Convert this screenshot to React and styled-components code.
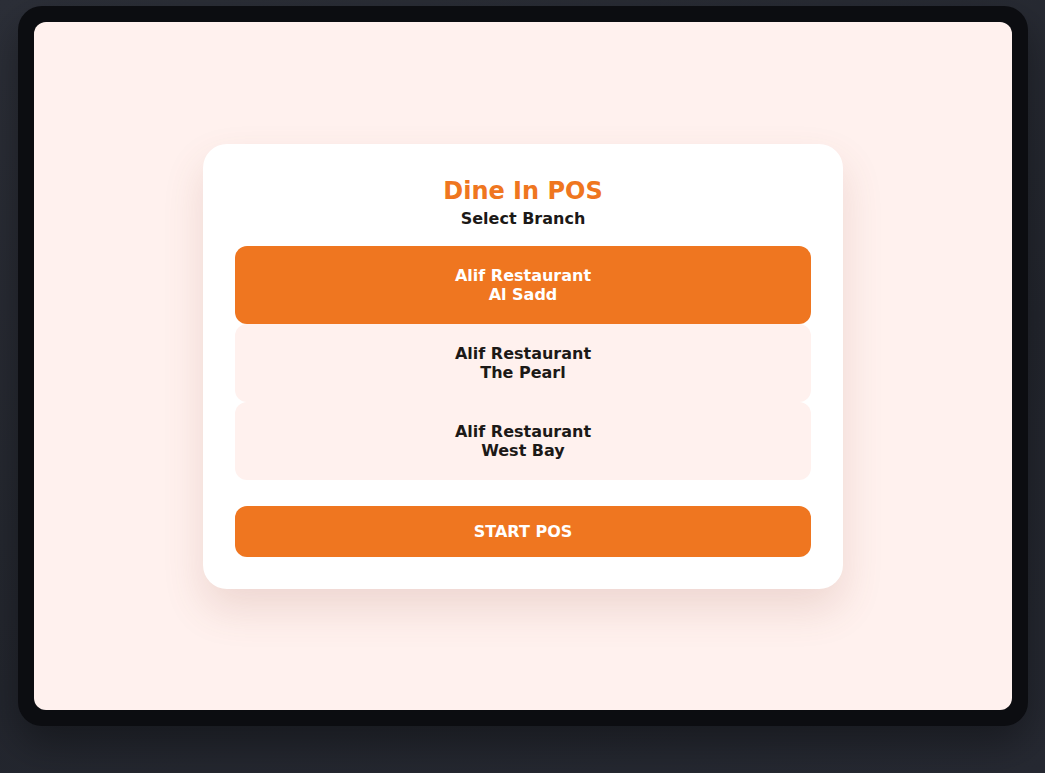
import React, { useState } from 'react'
import styled, { createGlobalStyle } from 'styled-components'

const GlobalStyle = createGlobalStyle`
  * { box-sizing: border-box; }
  html, body {
    margin: 0;
    padding: 0;
    height: 100%;
  }
  body {
    background: linear-gradient(160deg, #2c2f38 0%, #23262e 60%, #262932 100%);
    font-family: "DejaVu Sans", "Liberation Sans", sans-serif;
  }
`

const branches = [
  { name: 'Alif Restaurant', area: 'Al Sadd' },
  { name: 'Alif Restaurant', area: 'The Pearl' },
  { name: 'Alif Restaurant', area: 'West Bay' },
]

export default function App() {
  const [selected, setSelected] = useState(0)

  return (
    <>
      <GlobalStyle />
      <Page>
        <Device>
          <Screen>
            <Card>
              <Title>Dine In POS</Title>
              <Subtitle>Select Branch</Subtitle>
              <BranchList>
                {branches.map((b, i) => (
                  <BranchButton
                    key={b.area}
                    $active={selected === i}
                    onClick={() => setSelected(i)}
                  >
                    {b.name}
                    <br />
                    {b.area}
                  </BranchButton>
                ))}
              </BranchList>
              <StartButton>START POS</StartButton>
            </Card>
          </Screen>
        </Device>
      </Page>
    </>
  )
}

const Page = styled.div`
  width: 1045px;
  height: 773px;
  padding: 6px 17px 0 18px;
`

const Device = styled.div`
  width: 1010px;
  height: 720px;
  background: #0c0d11;
  border-radius: 24px;
  padding: 16px;
  box-shadow: 0 18px 40px rgba(0, 0, 0, 0.35);
`

const Screen = styled.div`
  width: 100%;
  height: 100%;
  background: #fff1ee;
  border-radius: 12px;
  display: flex;
  align-items: center;
  justify-content: center;
`

const Card = styled.div`
  width: 640px;
  background: #ffffff;
  border-radius: 24px;
  padding: 33px 32px 32px;
  display: flex;
  flex-direction: column;
  box-shadow: 0 20px 40px rgba(150, 80, 60, 0.16);
  margin-top: 1px;
`

const Title = styled.h1`
  margin: 0;
  text-align: center;
  font-size: 24px;
  font-weight: 700;
  color: #ef7620;
`

const Subtitle = styled.h2`
  margin: 4px 0 18px;
  text-align: center;
  font-size: 16px;
  font-weight: 700;
  color: #1c1917;
`

const BranchList = styled.div`
  display: flex;
  flex-direction: column;
`

const BranchButton = styled.button`
  border: none;
  border-radius: 12px;
  padding: 20px 16px;
  height: 78px;
  font-family: inherit;
  font-size: 16px;
  font-weight: 700;
  line-height: 19px;
  cursor: pointer;
  background: ${p => (p.$active ? '#ef7620' : '#fff1ee')};
  color: ${p => (p.$active ? '#ffffff' : '#1c1917')};
`

const StartButton = styled.button`
  margin-top: 26px;
  border: none;
  border-radius: 12px;
  height: 51px;
  font-family: inherit;
  font-size: 16px;
  font-weight: 700;
  color: #ffffff;
  background: #ef7620;
  cursor: pointer;
`
